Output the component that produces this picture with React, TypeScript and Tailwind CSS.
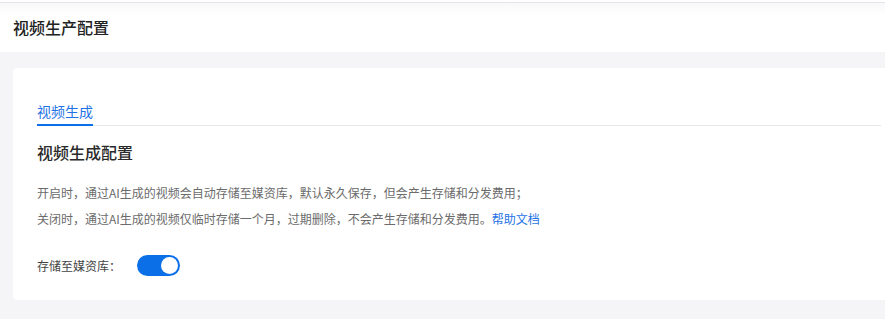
const FONT = { fontFamily: '"Noto Sans CJK SC", "Noto Sans", sans-serif' };

const Toggle = ({ on }: { on: boolean }) => (
  <div
    className={`flex h-[21px] w-[43px] items-center rounded-full px-[2px] ${
      on ? 'justify-end bg-[#0b6fe8]' : 'justify-start bg-[#c9cdd4]'
    }`}
  >
    <div className="h-[17px] w-[17px] rounded-full bg-white" />
  </div>
);

export default function App() {
  return (
    <div className="min-h-[319px] w-full overflow-hidden bg-[#f5f5f7]" style={FONT}>
      {/* header */}
      <div className="bg-white pt-[2px]">
        <div className="flex h-[50px] items-center border-t border-[#e6e4ef] bg-gradient-to-b from-[#f8f8f9] to-white to-[25%] px-[13px] pb-[2px]">
          <span className="text-[16px] font-medium text-[#222]">视频生产配置</span>
        </div>
      </div>

      {/* card */}
      <div className="mr-[-20px] ml-[13px] mt-[16px] rounded-[4px] bg-white px-[24px] pb-[24px] pt-[32px]">
        <div className="flex border-b border-[#e8e8ea]">
          <div className="-mb-px border-b-2 border-[#0b6fe8] pb-[2px] text-[14px] leading-[22px] text-[#1f73e6]">
            视频生成
          </div>
        </div>

        <div className="mt-[14px] text-[16px] font-medium leading-[24px] text-[#2a2a2a]">视频生成配置</div>

        <div className="mt-[16px] text-[12px] leading-[26px] text-[#6b6b6b]">
          <p>开启时，通过AI生成的视频会自动存储至媒资库，默认永久保存，但会产生存储和分发费用；</p>
          <p>
            关闭时，通过AI生成的视频仅临时存储一个月，过期删除，不会产生存储和分发费用。
            <a className="text-[#1f73e6]">帮助文档</a>
          </p>
        </div>

        <div className="mt-[23px] flex items-center">
          <span className="w-[100px] text-[12px] text-[#444]">存储至媒资库：</span>
          <Toggle on />
        </div>
      </div>
    </div>
  );
}
